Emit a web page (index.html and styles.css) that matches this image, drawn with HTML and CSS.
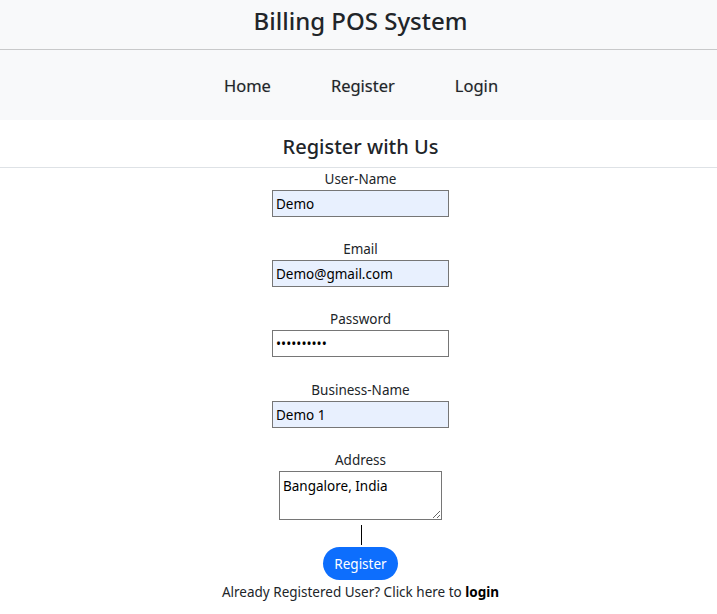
FILE: index.html
```html
<!DOCTYPE html>
<html lang="en">
<head>
<meta charset="utf-8">
<title>Billing POS System</title>
<link rel="stylesheet" href="styles.css">
</head>
<body>
<header class="site-header">
  <div class="brand">Billing POS System</div>
  <hr class="brand-rule">
  <nav class="main-nav">
    <a href="#" class="nav-link">Home</a>
    <a href="#" class="nav-link">Register</a>
    <a href="#" class="nav-link">Login</a>
  </nav>
</header>
<main class="register">
  <h2 class="register-title">Register with Us</h2>
  <form class="register-form">
    <div class="field">
      <label class="field-label" for="uname">User-Name</label>
      <input class="field-input autofilled" id="uname" type="text" value="Demo">
    </div>
    <div class="field">
      <label class="field-label" for="email">Email</label>
      <input class="field-input autofilled" id="email" type="text" value="Demo@gmail.com">
    </div>
    <div class="field">
      <label class="field-label" for="pwd">Password</label>
      <input class="field-input" id="pwd" type="password" value="demo123456">
    </div>
    <div class="field field-shift">
      <label class="field-label" for="bname">Business-Name</label>
      <input class="field-input autofilled" id="bname" type="text" value="Demo 1">
    </div>
    <div class="field field-last">
      <label class="field-label" for="addr">Address</label>
      <textarea class="field-area" id="addr">Bangalore, India</textarea>
    </div>
    <span class="divider"></span>
    <button type="button" class="btn-register">Register</button>
    <p class="login-note">Already Registered User? Click here to <a href="#" class="login-link">login</a></p>
  </form>
</main>
</body>
</html>
```

FILE: styles.css
```css
* { box-sizing: border-box; }
html, body { margin: 0; padding: 0; background: #fff; }
body {
  font-family: "Noto Sans", "Open Sans", sans-serif;
  color: #212529;
}
.site-header {
  background: #f8f9fa;
  height: 120px;
}
.brand {
  height: 49px;
  display: flex;
  align-items: center;
  justify-content: center;
  font-size: 24px;
  font-weight: 500;
  padding-bottom: 8px;
  padding-left: 4px;
}
.brand-rule {
  margin: 0;
  border: 0;
  border-top: 1px solid #c8c9ca;
}
.main-nav {
  height: 70px;
  display: flex;
  align-items: center;
  justify-content: center;
  gap: 60px;
  padding-left: 5px;
}
.nav-link {
  font-size: 16.5px;
  color: #212529;
  text-decoration: none;
  text-shadow: 0 0 1px rgba(0,0,0,0.25);
}
.register-title {
  margin: 0;
  height: 48px;
  display: flex;
  align-items: center;
  justify-content: center;
  font-size: 20px;
  font-weight: 500;
  border-bottom: 1px solid #dee2e6;
  padding-top: 5px;
  padding-left: 4px;
}
.register-form {
  display: flex;
  flex-direction: column;
  align-items: center;
  margin: 0;
  padding-left: 4px;
}
.field {
  display: flex;
  flex-direction: column;
  align-items: center;
  margin-bottom: 21px;
}
.field-shift { margin-top: 1px; }
.field-last { margin-bottom: 0; }
.field-label {
  font-size: 13.5px;
  line-height: 19px;
  height: 21px;
  padding-top: 2px;
}
.field-input {
  margin-top: 1px;
  width: 177px;
  height: 27px;
  border: 1px solid #767676;
  border-radius: 0;
  padding: 0 3px;
  font-family: inherit;
  font-size: 13.5px;
  color: #000;
  background: #fff;
  outline: none;
}
.field-input.autofilled { background: #e8f0fe; }
.field-area {
  margin-top: 1px;
  width: 163px;
  height: 49px;
  border: 1px solid #767676;
  border-radius: 0;
  padding: 5px 3px;
  font-family: inherit;
  font-size: 13.5px;
  color: #000;
  background: #fff;
  resize: both;
}
.divider {
  display: block;
  width: 1px;
  height: 20px;
  background: #000;
  margin-top: 5px;
  margin-left: 2px;
}
.btn-register {
  margin-top: 2px;
  width: 75px;
  height: 33px;
  border: 0;
  border-radius: 17px;
  background: #0d6efd;
  color: #fff;
  font-family: inherit;
  font-size: 13.5px;
  padding: 0;
  cursor: pointer;
}
.login-note {
  margin: 2px 0 0;
  font-size: 13.5px;
  line-height: 20px;
}
.login-link {
  color: #000;
  font-weight: 700;
  text-decoration: none;
}
```
